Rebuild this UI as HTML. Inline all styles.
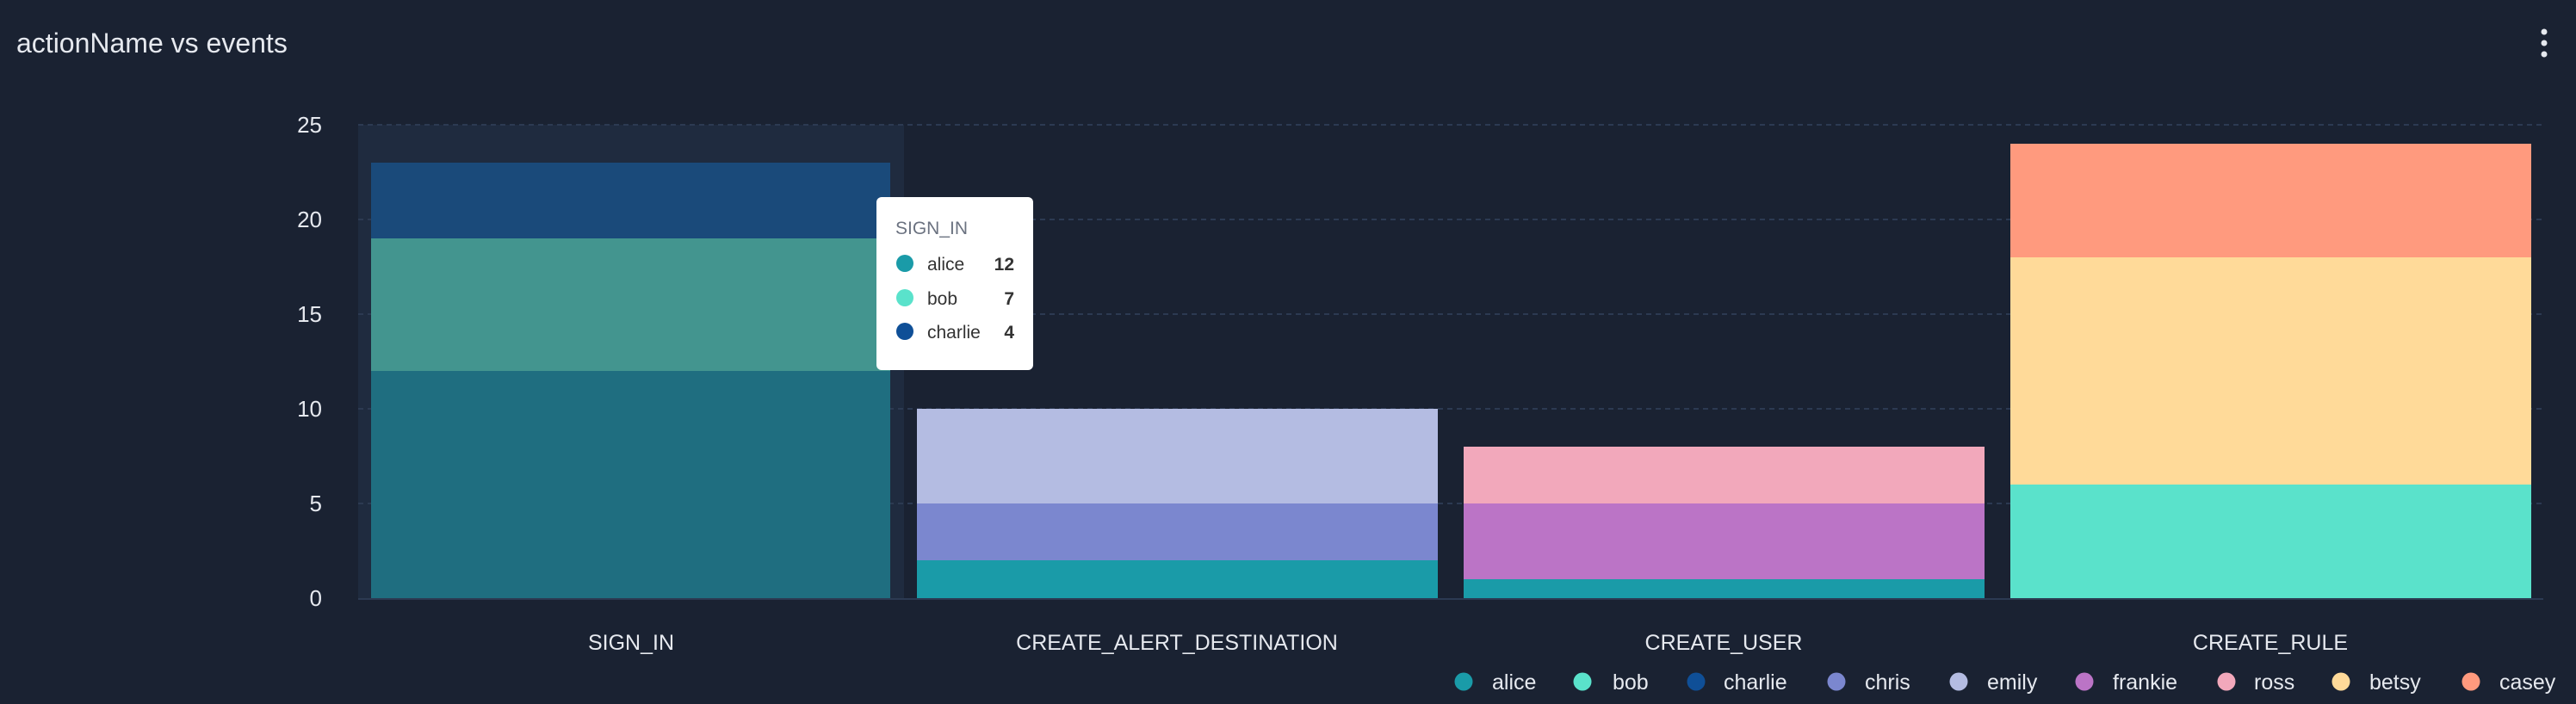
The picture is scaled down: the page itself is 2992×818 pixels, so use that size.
<!DOCTYPE html>
<html><head><meta charset="utf-8"><style>
html,body{margin:0;padding:0;background:#1a2232;width:2992px;height:818px;overflow:hidden;font-family:"Liberation Sans",sans-serif}
</style></head><body>
<svg width="2992" height="818" xmlns="http://www.w3.org/2000/svg" font-family="Liberation Sans, sans-serif">
<rect width="2992" height="818" fill="#1a2232"/>
<text x="19" y="61" fill="#e6e9ef" font-size="32">actionName vs events</text>
<circle cx="2955" cy="37" r="3.5" fill="#e6e9ef"/><circle cx="2955" cy="50" r="3.5" fill="#e6e9ef"/><circle cx="2955" cy="63" r="3.5" fill="#e6e9ef"/>
<rect x="416" y="145" width="634" height="550" fill="#1f2b3f"/>
<g stroke="#2c3a52" stroke-width="2" stroke-dasharray="6,5">
<line x1="416" y1="145" x2="2954" y2="145"/><line x1="416" y1="255" x2="2954" y2="255"/><line x1="416" y1="365" x2="2954" y2="365"/><line x1="416" y1="475" x2="2954" y2="475"/><line x1="416" y1="585" x2="2954" y2="585"/>
</g>
<line x1="416" y1="696" x2="2954" y2="696" stroke="#2c3a52" stroke-width="2"/>
<g fill="#e6e9ef" font-size="26" text-anchor="end">
<text x="374" y="154">25</text><text x="374" y="264">20</text><text x="374" y="374">15</text><text x="374" y="484">10</text><text x="374" y="594">5</text><text x="374" y="704">0</text>
</g>
<!-- SIGN_IN -->
<rect x="431" y="431" width="603" height="264" fill="#1f6e80"/>
<rect x="431" y="277" width="603" height="154" fill="#43958f"/>
<rect x="431" y="189" width="603" height="88" fill="#1a4a7a"/>
<!-- CREATE_ALERT -->
<rect x="1065" y="651" width="605" height="44" fill="#1a9ba8"/>
<rect x="1065" y="585" width="605" height="66" fill="#7b87cf"/>
<rect x="1065" y="475" width="605" height="110" fill="#b4bce2"/>
<!-- CREATE_USER -->
<rect x="1700" y="673" width="605" height="22" fill="#1a9ba8"/>
<rect x="1700" y="585" width="605" height="88" fill="#bb74c6"/>
<rect x="1700" y="519" width="605" height="66" fill="#f2a8bb"/>
<!-- CREATE_RULE -->
<rect x="2335" y="563" width="605" height="132" fill="#5ae2cb"/>
<rect x="2335" y="299" width="605" height="264" fill="#ffda99"/>
<rect x="2335" y="167" width="605" height="132" fill="#ff9a7e"/>
<g fill="#e6e9ef" font-size="25" text-anchor="middle">
<text x="733" y="755">SIGN_IN</text><text x="1367" y="755">CREATE_ALERT_DESTINATION</text><text x="2002" y="755">CREATE_USER</text><text x="2637" y="755">CREATE_RULE</text>
</g>
<!-- tooltip -->
<rect x="1018" y="229" width="182" height="201" rx="6" fill="#ffffff"/>
<text x="1040" y="272" font-size="21" fill="#6b7280">SIGN_IN</text>
<circle cx="1051" cy="306" r="10" fill="#1a9ba8"/><text x="1077" y="314" font-size="21" fill="#333">alice</text><text x="1178" y="314" font-size="21" font-weight="bold" fill="#333" text-anchor="end">12</text>
<circle cx="1051" cy="346" r="10" fill="#5ae2cb"/><text x="1077" y="354" font-size="21" fill="#333">bob</text><text x="1178" y="354" font-size="21" font-weight="bold" fill="#333" text-anchor="end">7</text>
<circle cx="1051" cy="385" r="10" fill="#0f4f97"/><text x="1077" y="393" font-size="21" fill="#333">charlie</text><text x="1178" y="393" font-size="21" font-weight="bold" fill="#333" text-anchor="end">4</text>
<!-- legend -->
<g font-size="25" fill="#e6e9ef">
<circle cx="1700" cy="792" r="10.5" fill="#1a9ba8"/><text x="1733" y="801">alice</text>
<circle cx="1838" cy="792" r="10.5" fill="#5ae2cb"/><text x="1873" y="801">bob</text>
<circle cx="1970" cy="792" r="10.5" fill="#0f4f97"/><text x="2002" y="801">charlie</text>
<circle cx="2133" cy="792" r="10.5" fill="#7b87cf"/><text x="2166" y="801">chris</text>
<circle cx="2275" cy="792" r="10.5" fill="#b4bce2"/><text x="2308" y="801">emily</text>
<circle cx="2421" cy="792" r="10.5" fill="#bb74c6"/><text x="2454" y="801">frankie</text>
<circle cx="2586" cy="792" r="10.5" fill="#f2a8bb"/><text x="2618" y="801">ross</text>
<circle cx="2719" cy="792" r="10.5" fill="#ffda99"/><text x="2752" y="801">betsy</text>
<circle cx="2870" cy="792" r="10.5" fill="#ff9a7e"/><text x="2903" y="801">casey</text>
</g>
</svg>
</body></html>
